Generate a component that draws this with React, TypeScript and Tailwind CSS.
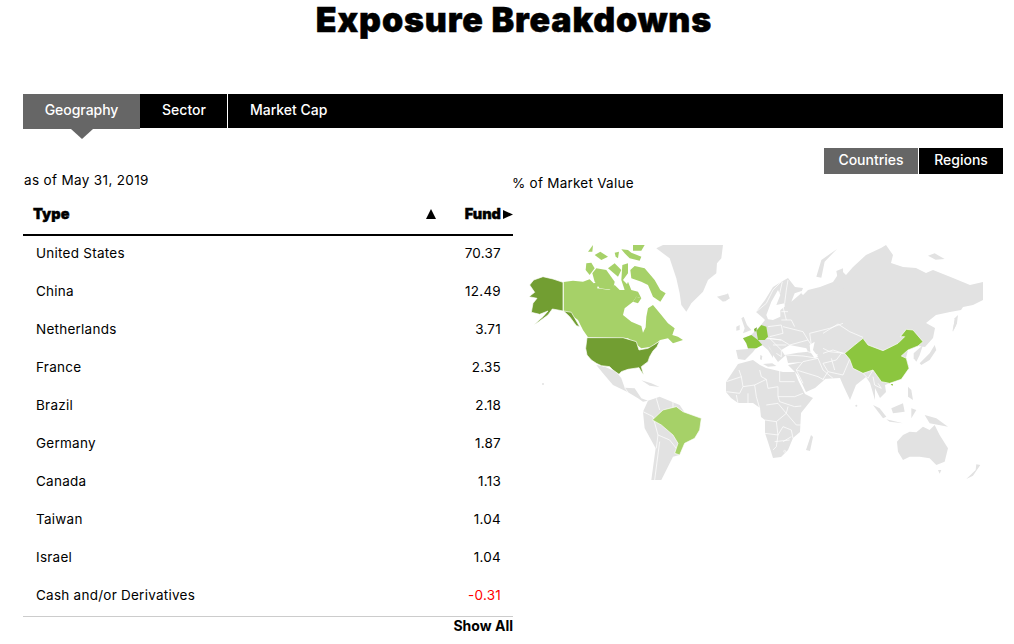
const rows: [string, string][] = [
  ["United States", "70.37"],
  ["China", "12.49"],
  ["Netherlands", "3.71"],
  ["France", "2.35"],
  ["Brazil", "2.18"],
  ["Germany", "1.87"],
  ["Canada", "1.13"],
  ["Taiwan", "1.04"],
  ["Israel", "1.04"],
  ["Cash and/or Derivatives", "-0.31"],
];

const GRAY = "#e2e2e2";
const LIGHT = "#a6d168";
const MID = "#8cc63f";
const DARK = "#729e32";

function Poly({ p, f = GRAY, s = 2 }: { p: string; f?: string; s?: number }) {
  return <polygon points={p} fill={f} stroke="#ffffff" strokeWidth={s} strokeLinejoin="round" />;
}

function Land({ p, f = GRAY }: { p: string; f?: string }) {
  return <polygon points={p} fill={f} />;
}

function Line({ p, w = 2.2 }: { p: string; w?: number }) {
  return <polyline points={p} fill="none" stroke="#ffffff" strokeWidth={w} strokeLinejoin="round" />;
}

function WorldMap() {
  return (
    <svg width="490" height="250" viewBox="510 235 490 250" className="block">
      {/* Canada */}
      <g transform="translate(570 240) scale(0.3333)">
        <Land f={LIGHT} p="-28,126 0,122 30,125 50,118 62,130 80,125 72,145 110,150 125,135 140,150 155,150 165,125 175,150 195,155 205,175 190,170 180,185 155,205 150,225 175,245 205,258 210,278 218,262 220,230 225,205 240,195 265,225 285,250 305,265 298,285 315,290 330,300 300,310 285,295 262,300 235,320 205,325 185,310 165,295 45,292 30,270 15,240 -5,225 -28,213" />
        <Land f={LIGHT} p="172,90 185,78 215,85 245,120 262,150 278,160 262,185 240,170 225,135 205,125 190,120 175,115" />
        <Land f={LIGHT} p="45,35 60,15 58,35" />
        <Land f={LIGHT} p="65,45 82,35 105,50 85,60" />
        <Land f={LIGHT} p="125,38 138,35 135,55 128,50" />
        <Land f={LIGHT} p="145,28 165,30 175,38 205,50 200,62 170,55 155,40" />
        <Land f={LIGHT} p="180,15 215,15 205,32 180,32" />
        <Land f={LIGHT} p="40,70 55,68 65,85 50,105 38,90" />
        <Land f={LIGHT} p="58,100 70,85 100,90 125,125 120,150 80,145 65,125" />
        <Land f={LIGHT} p="105,85 125,70 145,90 135,110" />
        <Land f={LIGHT} p="148,75 165,70 165,100 150,120 170,140 155,150 145,120" />
        <Land f={LIGHT} p="190,170 205,175 195,190 180,185" />
      </g>
      {/* Greenland, Latin America, Alaska, USA, Brazil */}
      <g transform="translate(510 235) scale(0.3333)">
        <Land p="430,40 450,30 630,30 625,70 612,85 610,115 585,135 570,170 535,205 520,230 505,210 500,175 490,130 470,70" />
        <Land p="612,185 640,178 650,190 630,200" />
        <Land p="250,390 275,395 310,410 325,430 335,458 365,460 385,490 405,497 390,500 375,490 345,472 300,450 270,415" />
        <Line p="335,458 345,472" />
        <Land p="385,436 415,445 440,456 410,452" />
        <Land p="390,530 405,497 440,485 500,510 520,540 500,660 480,665 445,735 415,735 428,640 395,580" />
        <Line p="390,530 420,545 435,600 430,640" />
        <Line p="435,600 470,615 490,640" />
        <Line p="430,490 440,525" />
        <Line p="480,495 480,520" />
        <Line p="440,620 425,735" />
        <Poly p="50,150 62,135 90,125 120,132 150,142 150,228 135,225 118,222 105,240 75,262 62,270 90,245 105,228 80,238 55,232 60,205 72,190 48,185 65,172" f={DARK} />
        <Poly p="152,228 175,232 200,275 190,272 170,245" f={DARK} />
        <Poly p="222,308 330,308 370,320 378,345 405,340 430,325 440,318 432,335 420,348 410,365 405,380 385,395 392,420 382,405 378,398 345,403 325,410 318,418 300,405 290,395 265,392 250,385 235,375 222,360 218,340" f={DARK} />
        <Poly p="418,555 450,525 490,515 510,530 565,550 560,585 545,610 515,625 500,660 485,655 495,625 480,600 445,570" f={LIGHT} />
        <circle cx="90" cy="447" r="3" fill={GRAY} />
      </g>
      {/* Eurasia in page coordinates */}
      <Land p="753,312 762,300 770,287 778,282 785,278 792,287 800,288 798,293 800,295 805,290 817,287 830,282 838,270 843,275 850,267 863,255 878,248 883,245 890,255 888,263 900,267 913,268 923,273 930,270 950,278 967,285 980,282 980,300 970,305 960,307 958,310 947,312 933,315 923,323 932,328 930,338 922,347 915,346 905,350 903,358 906,368 898,379 887,383 882,385 883,392 878,397 877,398 872,388 872,400 867,383 863,377 853,385 847,400 840,385 837,378 820,379 827,375 812,388 803,392 795,375 785,365 800,362 785,363 783,355 775,362 770,355 770,358 765,350 759,345 753,348 750,352 742,360 735,359 733,350 745,349 743,343 740,338 748,335 753,330 758,325 762,320 760,318" />
      {/* Africa */}
      <Land p="723,382 735,364 750,360 757,365 763,368 780,372 792,372 795,380 802,394 810,398 798,413 797,432 790,438 785,450 778,457 770,458 765,442 762,433 762,420 758,417 757,408 750,403 735,403 728,398 723,392" />
      <Land p="803,450 808,435 810,437 807,451" />
      <g transform="translate(720 370) scale(0.3333)">
        <Line p="10,35 55,20 60,50 95,45 130,28 135,55 165,50 165,80" />
        <Line p="55,20 48,0" />
        <Line p="110,0 115,20 130,28" />
        <Line p="170,0 170,35 215,35" />
        <Line p="165,80 215,80 240,70" />
        <Line p="165,80 170,95 215,110 235,108" />
        <Line p="95,45 100,80 110,115" />
        <Line p="10,65 50,70 60,50" />
        <Line p="45,100 40,75" />
        <Line p="75,70 75,100" />
        <Line p="130,105 165,100 190,130" />
        <Line p="125,150 160,155 190,130 195,110" />
        <Line p="190,130 220,165 235,165" />
        <Line p="125,190 165,195 180,170 205,180" />
        <Line p="160,155 165,195 160,230 150,240" />
        <Line p="155,215 200,210" />
        <Line p="180,215 205,200" />
        <Line p="205,180 210,205" />
        <circle cx="185" cy="244" r="3" fill="none" stroke="#ffffff" strokeWidth={1.5} />
      </g>
      {/* Europe and west Asia */}
      <g transform="translate(720 270) scale(0.3333)">
        <Land p="0,80 15,70 20,85 5,95" />
        <Land p="55,145 62,140 72,165 85,180 60,190 65,175" />
        <Land p="40,170 50,165 50,180 40,182" />
        <Land p="112,255 118,258 116,270 111,268" />
        <Land p="120,282 148,280 160,288 135,290" />
        <polygon points="130,135 145,95 165,60 172,75 160,105 185,100 185,110 172,120 172,140 150,150 135,148" fill="#ffffff" />
        <polygon points="175,240 200,225 250,235 255,245 225,248 185,255" fill="#ffffff" />
        <polygon points="260,225 275,215 270,240 285,260 275,265 262,245" fill="#ffffff" />
        <polygon points="205,95 215,70 238,62 232,72" fill="#ffffff" />
        <polygon points="135,225 150,250 140,235" fill="#ffffff" />
        <Line p="100,125 130,100 150,60 175,35" />
        <Line p="178,35 170,70" />
        <Line p="195,30 190,60 185,100" />
        <Line p="180,110 190,150" />
        <Line p="175,125 195,125" />
        <Line p="135,170 175,165 180,190 140,200" />
        <Line p="180,170 240,185 255,210 200,225 175,210 140,205" />
        <Line p="175,150 205,150 215,170" />
        <Line p="140,205 160,225 175,240 175,260 160,250" />
        <Line p="130,205 175,210" />
        <Line p="150,225 190,225" />
        <Line p="255,210 265,225 260,190 320,175 360,160" />
        <Line p="255,245 285,255" />
        <Line p="190,255 240,258 285,265" />
        <Line p="240,275 285,265 300,300 330,325" />
        <Line p="240,275 220,300 240,340" />
        <Line p="220,300 285,320 330,345" />
        <Land f={MID} p="60,205 85,195 105,210 118,225 100,235 75,235 70,220" />
        <Land f={MID} p="100,182 115,165 130,170 135,200 125,210 105,210" />
        <Land f="#7fb23a" p="93,177 102,172 100,183 95,185" />
      </g>
      {/* Asia */}
      <g transform="translate(820 320) scale(0.3333)">
        <Land p="272,100 300,75 290,105 280,125 272,115" />
        <Land p="290,130 320,100 335,75 340,90 320,120 295,135" />
        <Land p="388,35 395,0 400,15" />
        <Land p="255,200 265,210 270,240 255,230" />
        <Land p="205,265 240,250 245,275 210,280" />
        <Land p="150,255 170,265 190,290 180,295" />
        <Land p="190,298 240,310 200,305" />
        <Land p="265,265 280,270 265,295" />
        <Land p="305,285 340,295 375,320 320,310" />
        <Land p="268,70 285,60 275,45" />
        <circle cx="100" cy="257" r="3" fill={GRAY} />
        <Line p="0,40 45,12 80,35 120,52" />
        <Line p="0,85 20,95 65,100" />
        <Line p="0,130 40,120 55,100" />
        <Line p="0,100 30,90 60,100" />
        <Line p="15,155 60,165 80,118" />
        <Line p="0,178 15,155 0,130" />
        <Line p="25,115 35,150" />
        <Line p="120,160 135,175 150,150" />
        <Line p="150,170 155,195 175,205 165,190" />
        <Poly p="65,100 95,75 120,55 135,75 180,92 225,70 245,50 232,50 250,28 270,30 300,65 285,78 255,90 235,108 250,115 258,145 235,178 200,190 175,185 150,150 120,160 90,145 80,118" f={MID} />
        <Land f={MID} p="203,192 210,192 208,198" />
      </g>
      {/* Australia, New Zealand, Arctic islands */}
      <g transform="translate(750 235) scale(0.3333)">
        <Land p="432,620 450,600 470,590 490,592 510,575 530,585 545,570 560,600 585,640 575,680 550,690 530,670 500,665 470,665 450,675 435,650" />
        <Land p="555,705 565,705 560,716" />
        <Land p="640,732 668,705 670,688 682,690 660,722" />
        <Land p="525,62 545,55 575,72 548,74" />
        <Land p="190,125 205,75 252,42 215,80 205,128" />
        <Land p="250,108 270,100 272,175 258,150" />
        <Land p="600,290 605,250 615,240 612,265" />
      </g>
    </svg>
  );
}

export default function App() {
  return (
    <div className="h-[644px] w-[1014px] overflow-hidden bg-white px-[23px] pr-[11px] text-black [font-family:Inter,sans-serif]">
      <h1 className="-mx-[23px] h-[94px] pt-[1px] pl-[2px] text-center text-[34px] leading-[38px] font-black tracking-[0.85px] [-webkit-text-stroke:0.5px_black]">
        Exposure Breakdowns
      </h1>
      <div className="flex h-[34px] bg-black text-sm leading-[32px] font-medium text-white">
        <div className="relative h-[35px] w-[117px] bg-[#666666] text-center tracking-[-0.05px]">
          Geography
          <span className="absolute top-[35px] left-[48px] h-0 w-0 border-x-[11px] border-t-[10px] border-x-transparent border-t-[#666666]" />
        </div>
        <div className="ml-px w-[87px] border-r border-white text-center">Sector</div>
        <div className="pl-[22px]">Market Cap</div>
      </div>
      <div className="flex">
        <div className="w-[490px]">
          <div className="mt-[44px] h-[16px] pl-px text-[13.5px] leading-[16px] tracking-[0.35px]">as of May 31, 2019</div>
          <div className="mt-[16px] flex h-[30px] items-start justify-between pt-[2px] pl-[10px] text-[14.5px] leading-[16px] font-black [-webkit-text-stroke:0.4px_black]">
            <span>Type</span>
            <span className="flex items-center">
              <svg width="10" height="10" viewBox="0 0 10 10" className="mr-[29px]">
                <polygon points="5,0 10,10 0,10" fill="#000000" />
              </svg>
              <span>Fund</span>
              <svg width="10" height="9" viewBox="0 0 10 9" className="ml-[2px]">
                <polygon points="0,0 10,4.5 0,9" fill="#000000" />
              </svg>
            </span>
          </div>
          <div className="h-[2px] bg-black" />
          <div className="-mt-[2px] h-[380px]">
            {rows.map(([name, value]) => (
              <div key={name} className="flex h-[38px] items-center justify-between pr-[12px] pl-[13px] text-[13.5px] tracking-[0.25px]">
                <span>{name}</span>
                <span className={value.startsWith("-") ? "text-[#ff0000]" : ""}>{value}</span>
              </div>
            ))}
          </div>
          <div className="mt-[2px] border-t border-[#cccccc] text-right text-sm leading-[18px] font-bold">Show All</div>
        </div>
        <div className="flex-1">
          <div className="mt-[20px] flex h-[26px] justify-end text-sm leading-[24px] font-medium text-white">
            <div className="w-[94px] bg-[#666666] text-center">Countries</div>
            <div className="ml-px w-[84px] bg-black text-center">Regions</div>
          </div>
          <div className="-ml-px h-[61px] text-[13.5px] leading-[18px] tracking-[0.25px]">% of Market Value</div>
          <WorldMap />
        </div>
      </div>
    </div>
  );
}
